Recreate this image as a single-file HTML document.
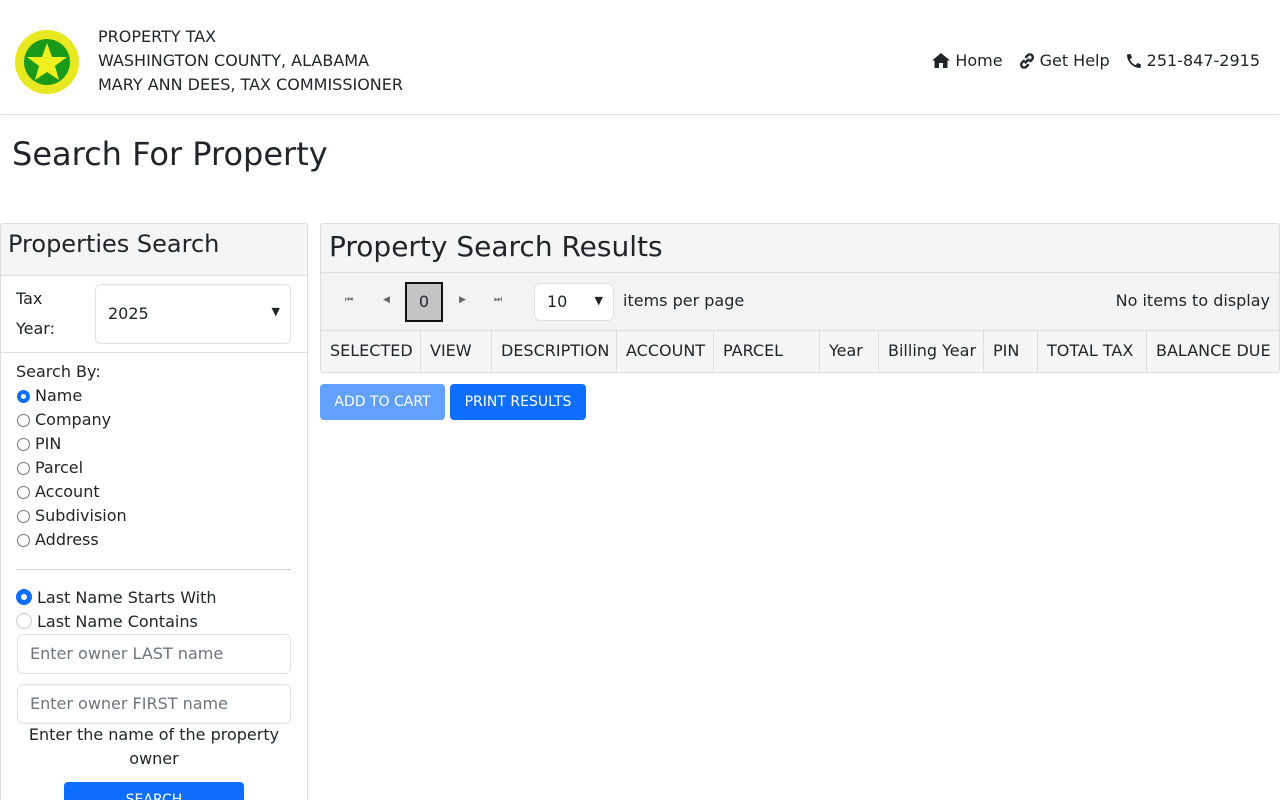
<!DOCTYPE html>
<html><head><meta charset="utf-8"><style>
*{box-sizing:border-box}
html,body{margin:0;width:1280px;height:800px;overflow:hidden}
body{font-family:"DejaVu Sans","Liberation Sans",sans-serif;font-size:16px;color:#212529;background:#fff;position:relative}
.a{position:absolute}
.hdr{left:0;top:0;width:1280px;height:115px;border-bottom:1px solid #e2e2e2;box-shadow:0 1px 3px rgba(0,0,0,.06)}
.ht{left:98px;top:25px;line-height:24px;font-size:16px}
.nav{right:20px;top:51px;font-size:16px;display:flex;gap:16px;align-items:center}
.nav span{display:flex;align-items:center;gap:5px}
h1{position:absolute;left:12px;top:134px;margin:0;font-size:32px;font-weight:400;line-height:40px}
.lp{left:0;top:223px;width:308px;height:577px;border:1px solid #ddd;border-bottom:0;border-radius:3px 3px 0 0;overflow:hidden}
.lph{height:52px;background:#f5f5f5;border-bottom:1px solid #ddd;font-size:24px;padding:6px 7px}
.sel{border:1px solid #dee2e6;border-radius:6px;background:#fff}
.rad{display:flex;align-items:center;height:24px}
.rad i{width:13px;height:13px;border:1px solid #767676;border-radius:50%;margin-right:5px;margin-left:1px;display:inline-block}
.inp{left:16px;width:274px;height:40px;border:1px solid #dee2e6;border-radius:6px;padding:9px 12px;color:#6c757d}
.rp{left:320px;top:223px;width:960px;height:150px;border:1px solid #ddd;border-radius:3px;overflow:hidden}
.rph{height:49px;background:#f5f5f5;border-bottom:1px solid #e0e0e0;font-size:28px;padding:3px 8px;line-height:40px}
.pg{height:58px;background:#f3f3f3;border-bottom:1px solid #ddd;position:relative}
.th{display:flex;height:42px;background:#f5f5f5;line-height:40px}
.th div{border-right:1px solid #ddd;padding-left:9px}
.btn{color:#fff;border-radius:4px;font-size:14px;text-align:center;line-height:36px;height:36px}
.pi{color:#666;font-size:9px;top:22px}
</style></head><body>
<div class="a hdr"></div>
<svg class="a" style="left:14px;top:29px" width="66" height="66" viewBox="0 0 66 66"><circle cx="33" cy="33" r="32" fill="#e8e820"/><circle cx="33" cy="33" r="23" fill="#1a9a1a"/><polygon points="33,14 38,28 53,28 41,37 45,51 33,43 21,51 25,37 13,28 28,28" fill="#f0f020"/></svg>
<div class="a ht">PROPERTY TAX<br>WASHINGTON COUNTY, ALABAMA<br>MARY ANN DEES, TAX COMMISSIONER</div>
<div class="a nav">
<span><svg width="18" height="15" viewBox="0 0 18 15"><path d="M9 0L0 7.5h2.5V15h4.5v-5h4v5h4.5V7.5H18z" fill="#212529"/></svg>Home</span>
<span><svg width="16" height="16" viewBox="0 0 16 16"><path d="M6.5 9.5l3-3M7 4l2-2a3 3 0 014.2 4.2l-2 2M9 12l-2 2a3 3 0 01-4.2-4.2l2-2" stroke="#212529" stroke-width="2.4" fill="none" stroke-linecap="round"/></svg>Get Help</span>
<span><svg width="16" height="16" viewBox="0 0 16 16"><path d="M15 11.5l-3.5-1.5-2 2.2C7 11 5 9 3.8 6.5L6 4.5 4.5 1 1 1.5C1 9 7 15 14.5 15z" fill="#212529"/></svg>251-847-2915</span>
</div>
<h1>Search For Property</h1>
<div class="a lp">
<div class="lph">Properties Search</div>
<div class="a" style="left:15px;top:60px;line-height:30px">Tax<br>Year:</div>
<div class="a sel" style="left:94px;top:60px;width:196px;height:60px;padding:19px 12px">2025<span class="a" style="right:10px;top:20px;font-size:11px">▼</span></div>
<div class="a" style="left:0;top:128px;width:306px;border-top:1px solid #ddd"></div>
<div class="a" style="left:15px;top:136px;line-height:24px">Search By:
<div class="rad"><i style="border:4px solid #0d6efd"></i>Name</div>
<div class="rad"><i></i>Company</div>
<div class="rad"><i></i>PIN</div>
<div class="rad"><i></i>Parcel</div>
<div class="rad"><i></i>Account</div>
<div class="rad"><i></i>Subdivision</div>
<div class="rad"><i></i>Address</div>
</div>
<div class="a" style="left:15px;top:345px;width:275px;border-top:1px solid #ccc"></div>
<div class="a" style="left:15px;top:361px">
<div class="rad"><i style="width:16px;height:16px;border:5px solid #0d6efd;margin-left:0"></i>Last Name Starts With</div>
<div class="rad"><i style="width:16px;height:16px;border-color:#ccc;margin-left:0"></i>Last Name Contains</div>
</div>
<div class="a inp" style="top:410px">Enter owner LAST name</div>
<div class="a inp" style="top:460px">Enter owner FIRST name</div>
<div class="a" style="left:15px;top:499px;width:276px;text-align:center;line-height:24px">Enter the name of the property owner</div>
<div class="a btn" style="left:63px;top:558px;width:180px;background:#0d6efd">SEARCH</div>
</div>
<div class="a rp">
<div class="rph">Property Search Results</div>
<div class="pg">
<span class="a pi" style="left:24px">⏮</span>
<span class="a pi" style="left:62px">◀</span>
<div class="a" style="left:84px;top:9px;width:38px;height:40px;border:2px solid #111;background:#c4c4c4;text-align:center;line-height:36px">0</div>
<span class="a pi" style="left:138px">▶</span>
<span class="a pi" style="left:173px">⏭</span>
<div class="a sel" style="left:213px;top:10px;width:80px;height:38px;padding:8px 12px">10<span class="a" style="right:10px;top:10px;font-size:11px">▼</span></div>
<div class="a" style="left:302px;top:18px">items per page</div>
<div class="a" style="right:9px;top:18px">No items to display</div>
</div>
<div class="th">
<div style="width:100px">SELECTED</div><div style="width:71px">VIEW</div><div style="width:125px">DESCRIPTION</div><div style="width:97px">ACCOUNT</div><div style="width:106px">PARCEL</div><div style="width:59px">Year</div><div style="width:105px">Billing Year</div><div style="width:54px">PIN</div><div style="width:109px">TOTAL TAX</div><div style="border:0">BALANCE DUE</div>
</div>
</div>
<div class="a btn" style="left:320px;top:384px;width:125px;background:#62a0fd">ADD TO CART</div>
<div class="a btn" style="left:450px;top:384px;width:136px;background:#0d6efd">PRINT RESULTS</div>
</body></html>
